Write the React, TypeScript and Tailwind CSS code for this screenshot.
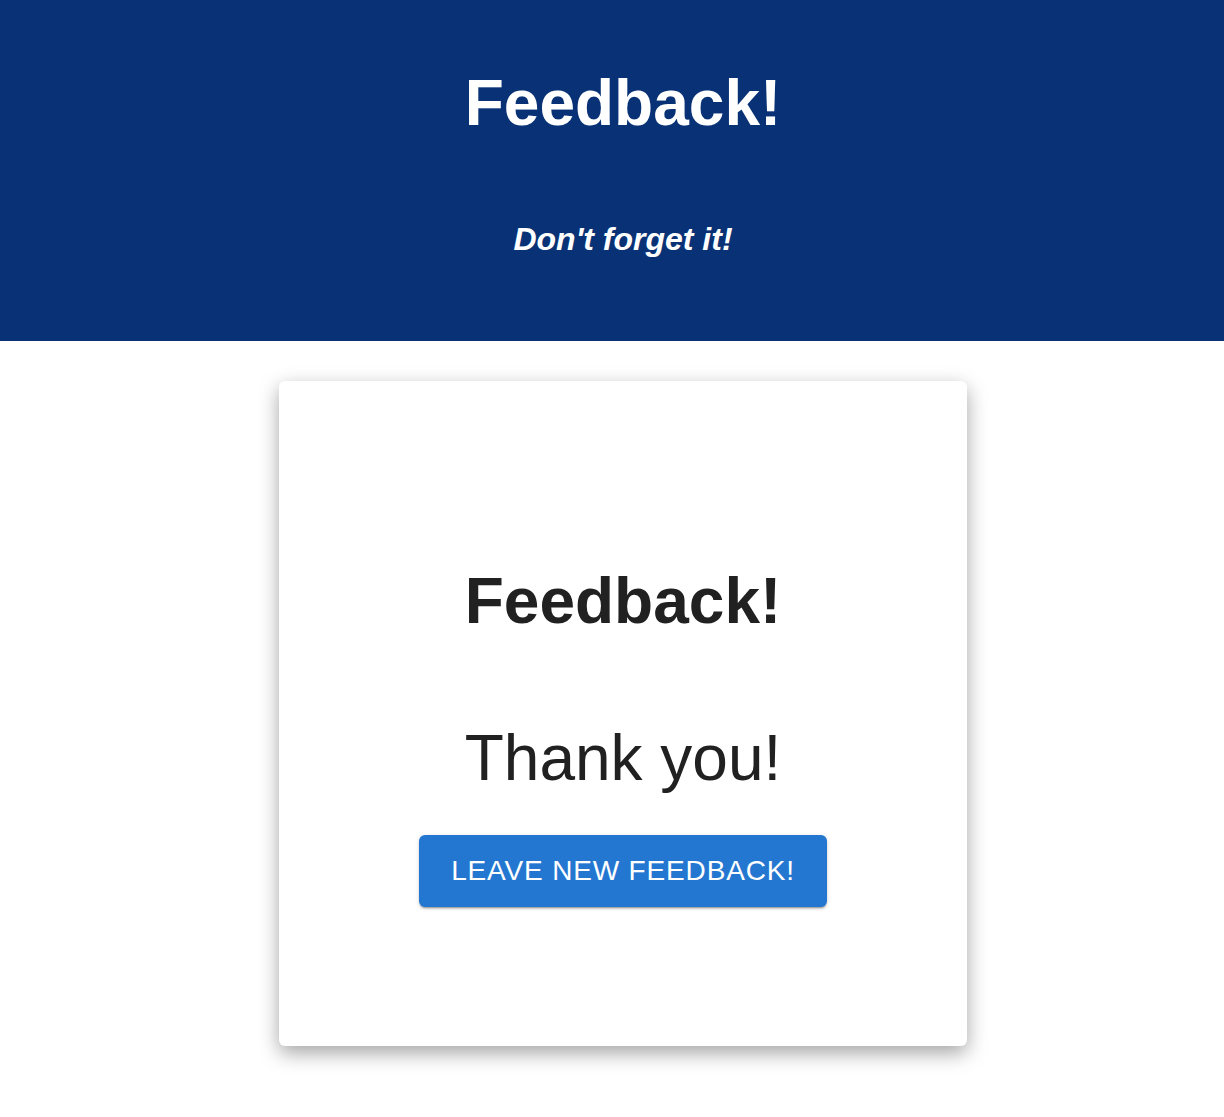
import React from 'react';

const font = { fontFamily: '"Liberation Sans", Arial, Helvetica, sans-serif' };

export default function App() {
  return (
    <div className="min-h-screen bg-white" style={font}>
      {/* HEADER */}
      <header className="h-[341px] bg-[#083275] text-white flex flex-col items-center pt-[71px] pl-[22px]">
        <h1 className="text-[64px] leading-[64px] font-bold">Feedback!</h1>
        <p className="mt-[88px] text-[32px] leading-[32px] font-bold italic">Don't forget it!</p>
      </header>

      {/* CARD */}
      <div className="flex justify-center pt-10 pb-[70px] pl-[22px]">
        <div className="w-[688px] h-[665px] bg-white rounded-md shadow-[0_7px_20px_rgba(0,0,0,0.36)] flex flex-col items-center pt-[188px] text-[#212121]">
          <h2 className="text-[64px] leading-[64px] font-bold">Feedback!</h2>
          <p className="mt-[93px] text-[64px] leading-[64px] font-light">Thank you!</p>
          <button className="mt-[45px] w-[408px] h-[72px] rounded-md bg-[#2477d1] text-white text-[28px] tracking-[0.03em] flex items-center justify-center shadow-[0_3px_1px_-2px_rgba(0,0,0,0.2),0_2px_2px_0_rgba(0,0,0,0.14),0_1px_5px_0_rgba(0,0,0,0.12)]">
            LEAVE NEW FEEDBACK!
          </button>
        </div>
      </div>
    </div>
  );
}
